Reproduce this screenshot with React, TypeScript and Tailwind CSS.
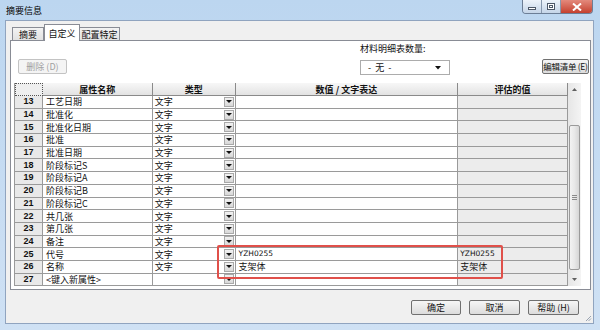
import React from 'react';

type Row = { n: number; name: string; type: string; value: string; evald: string };

const rows: Row[] = [
  { n: 13, name: '工艺日期', type: '文字', value: '', evald: '' },
  { n: 14, name: '批准化', type: '文字', value: '', evald: '' },
  { n: 15, name: '批准化日期', type: '文字', value: '', evald: '' },
  { n: 16, name: '批准', type: '文字', value: '', evald: '' },
  { n: 17, name: '批准日期', type: '文字', value: '', evald: '' },
  { n: 18, name: '阶段标记S', type: '文字', value: '', evald: '' },
  { n: 19, name: '阶段标记A', type: '文字', value: '', evald: '' },
  { n: 20, name: '阶段标记B', type: '文字', value: '', evald: '' },
  { n: 21, name: '阶段标记C', type: '文字', value: '', evald: '' },
  { n: 22, name: '共几张', type: '文字', value: '', evald: '' },
  { n: 23, name: '第几张', type: '文字', value: '', evald: '' },
  { n: 24, name: '备注', type: '文字', value: '', evald: '' },
  { n: 25, name: '代号', type: '文字', value: 'YZH0255', evald: 'YZH0255' },
  { n: 26, name: '名称', type: '文字', value: '支架体', evald: '支架体' },
  { n: 27, name: '<键入新属性>', type: '', value: '', evald: '' },
];

const DropBtn = () => (
  <span className="w-[10px] h-[10px] bg-gradient-to-b from-[#f2f2f2] to-[#d8d8d8] border border-[#a9a9a9] flex items-center justify-center shrink-0">
    <svg width="6" height="5" viewBox="0 0 6 5">
      <path d="M0 1H6L3 4Z" fill="#111" />
    </svg>
  </span>
);

const Btn = ({ label, w, disabled, small }: { label: string; w: string; disabled?: boolean; small?: boolean }) => (
  <div
    className={`${w} h-[15px] rounded-[2px] border flex items-center justify-center whitespace-nowrap leading-none ${
      small ? 'text-[8.5px] tracking-[-0.3px]' : 'text-[9px]'
    } ${
      disabled
        ? 'border-[#c3c3c3] bg-[#f4f4f4] text-[#a0a0a0]'
        : 'border-[#707070] bg-gradient-to-b from-[#f6f6f6] to-[#dcdcdc] text-[#111]'
    }`}
  >
    {label}
  </div>
);

export default function App() {
  return (
    <div className="relative w-[600px] h-[330px] bg-gradient-to-b from-[#bcd6f0] to-[#cfe1f4] flex flex-col font-['Noto_Sans_CJK_SC','Liberation_Sans',sans-serif] text-[#111] overflow-hidden">
      {/* title bar */}
      <div className="h-[20px] flex justify-between shrink-0">
        <div className="pl-[6px] pt-[5px] text-[9px] leading-[12px] text-black">摘要信息</div>
        <div className="flex self-start mr-[7px] h-[14px] rounded-b-[4px] overflow-hidden border border-t-0 border-[#6c7e96]">
          <div className="w-[19px] bg-gradient-to-b from-[#edf3fa] to-[#c5d5e8] border-r border-[#8798ae] flex items-center justify-center">
            <span className="w-[8px] h-[3px] bg-white border border-[#4d5868] mt-[3px]" />
          </div>
          <div className="w-[19px] bg-gradient-to-b from-[#edf3fa] to-[#c5d5e8] border-r border-[#8798ae] flex items-center justify-center">
            <span className="w-[8px] h-[7px] bg-white border border-[#4d5868] flex items-center justify-center">
              <span className="w-[4px] h-[3px] border border-[#4d5868]" />
            </span>
          </div>
          <div className="w-[31px] bg-gradient-to-b from-[#e3897c] to-[#c43f2e] flex items-center justify-center">
            <svg width="10" height="8" viewBox="0 0 10 8">
              <path d="M1 0.5L9 7.5M9 0.5L1 7.5" stroke="#fff" strokeWidth="2" />
            </svg>
          </div>
        </div>
      </div>

      {/* client area */}
      <div className="flex-1 ml-[5px] mr-[6px] mb-[7px] bg-[#f0f0f0] border border-[#90a4bf] flex flex-col">
        {/* tabs */}
        <div className="flex items-end h-[19px] ml-[6px] text-[9px] leading-none relative z-10">
          <div className="w-[32px] h-[13px] border border-b-0 border-[#898c95] bg-gradient-to-b from-[#f3f3f3] to-[#e2e2e2] flex items-center justify-center">
            摘要
          </div>
          <div className="w-[36px] h-[17px] -mb-px border border-b-0 border-[#898c95] bg-white flex items-center justify-center">
            自定义
          </div>
          <div className="w-[40px] h-[13px] border border-b-0 border-l-0 border-[#898c95] bg-gradient-to-b from-[#f3f3f3] to-[#e2e2e2] flex items-center justify-center">
            配置特定
          </div>
        </div>

        {/* tab panel */}
        <div className="ml-[4px] mr-[2px] h-[250px] border border-[#898c95] bg-white flex flex-col">
          <div className="h-[42px] flex items-start shrink-0">
            <div className="ml-[7px] mt-[18px]">
              <Btn label="删除 (D)" w="w-[49px]" disabled />
            </div>
            <div className="ml-[293px] flex flex-col">
              <div className="mt-[2px] text-[9px] leading-[12px]">材料明细表数量:</div>
              <div className="mt-[5px] w-[90px] h-[15px] border border-[#acacac] bg-white flex items-center justify-between pl-[7px] pr-[8px] text-[9px] leading-none">
                <span>-&nbsp;&nbsp;无&nbsp;&nbsp;-</span>
                <svg width="6" height="4" viewBox="0 0 6 4">
                  <path d="M0 0H6L3 3.5Z" fill="#111" />
                </svg>
              </div>
            </div>
            <div className="ml-[92px] mt-[18px]">
              <Btn label="编辑清单 (E)" w="w-[47px]" small />
            </div>
          </div>

          {/* grid */}
          <div className="ml-[3px] flex">
            <div className="flex flex-col w-[554px] border-l border-[#9a9a9a]">
              <div className="flex h-[13px] text-[9px] font-bold leading-none">
                <div className="w-[28px] bg-[#efefef] border border-dotted border-[#555]" />
                <div className="w-[110px] bg-gradient-to-b from-[#f7f7f7] to-[#e3e3e3] border-r border-b border-[#8a8a8a] flex items-center justify-center">属性名称</div>
                <div className="w-[83px] bg-gradient-to-b from-[#f7f7f7] to-[#e3e3e3] border-r border-b border-[#8a8a8a] flex items-center justify-center">类型</div>
                <div className="w-[223px] bg-gradient-to-b from-[#f7f7f7] to-[#e3e3e3] border-r border-b border-[#8a8a8a] flex items-center justify-center">数值 / 文字表达</div>
                <div className="w-[110px] bg-gradient-to-b from-[#f7f7f7] to-[#e3e3e3] border-r border-b border-[#8a8a8a] flex items-center justify-center">评估的值</div>
              </div>
              {rows.map((r) => (
                <div key={r.n} className="flex h-[12.7px] text-[9px] leading-none">
                  <div className="w-[28px] bg-[#e9e9e9] border-r border-b border-[#9a9a9a] flex items-center justify-center font-bold font-['Liberation_Sans',sans-serif] text-[9px]">
                    {r.n}
                  </div>
                  <div className="w-[110px] border-r border-b border-[#9a9a9a] flex items-center pl-[3px]">{r.name}</div>
                  <div className="w-[83px] border-r border-b border-[#9a9a9a] flex items-center justify-between pl-[2px] pr-[1px]">
                    <span>{r.type}</span>
                    <DropBtn />
                  </div>
                  <div className={`w-[223px] border-r border-b border-[#9a9a9a] flex items-center pl-[3px] ${r.value.startsWith('Y') ? "text-[7.5px] font-['DejaVu_Sans',sans-serif]" : ''}`}>
                    {r.value}
                  </div>
                  <div className={`w-[110px] bg-[#ececec] border-r border-b border-[#9a9a9a] flex items-center pl-[2px] ${r.evald.startsWith('Y') ? "text-[7.5px] font-['DejaVu_Sans',sans-serif]" : ''}`}>
                    {r.evald}
                  </div>
                </div>
              ))}
            </div>

            {/* scrollbar */}
            <div className="w-[13px] flex flex-col bg-gradient-to-r from-[#e6e6e6] to-[#f4f4f4]">
              <div className="h-[13px] flex items-center justify-center">
                <svg width="5" height="3" viewBox="0 0 5 3">
                  <path d="M0 3H5L2.5 0Z" fill="#606060" />
                </svg>
              </div>
              <div className="flex-1 flex flex-col items-center">
                <div className="mt-[29px] w-[11px] h-[145px] rounded-[2px] border border-[#9a9a9a] bg-gradient-to-r from-[#f3f3f3] via-[#e8e8e8] to-[#d6d6d6] flex items-center justify-center">
                  <div className="flex flex-col gap-[1px]">
                    <span className="w-[5px] h-px bg-[#8a8a8a]" />
                    <span className="w-[5px] h-px bg-[#8a8a8a]" />
                    <span className="w-[5px] h-px bg-[#8a8a8a]" />
                  </div>
                </div>
              </div>
              <div className="h-[13px] flex items-center justify-center">
                <svg width="5" height="3" viewBox="0 0 5 3">
                  <path d="M0 0H5L2.5 3Z" fill="#606060" />
                </svg>
              </div>
            </div>
          </div>
        </div>

        {/* dialog buttons */}
        <div className="flex justify-end gap-[8px] mt-[10px] mr-[14px]">
          <Btn label="确定" w="w-[50px]" />
          <Btn label="取消" w="w-[51px]" />
          <Btn label="帮助 (H)" w="w-[51px]" />
        </div>
        <div className="flex-1 flex items-end justify-end pr-[1px] pb-[1px]">
          <svg width="7" height="7" viewBox="0 0 7 7">
            <path d="M6 1L1 6M6 3.5L3.5 6" stroke="#9aa4b2" strokeWidth="1" />
          </svg>
        </div>
      </div>

      {/* highlight annotation */}
      <div className="absolute left-[217px] top-[245px] w-[286px] h-[34px] border-2 border-[#e0504a] rounded-[2px] pointer-events-none" />
    </div>
  );
}
